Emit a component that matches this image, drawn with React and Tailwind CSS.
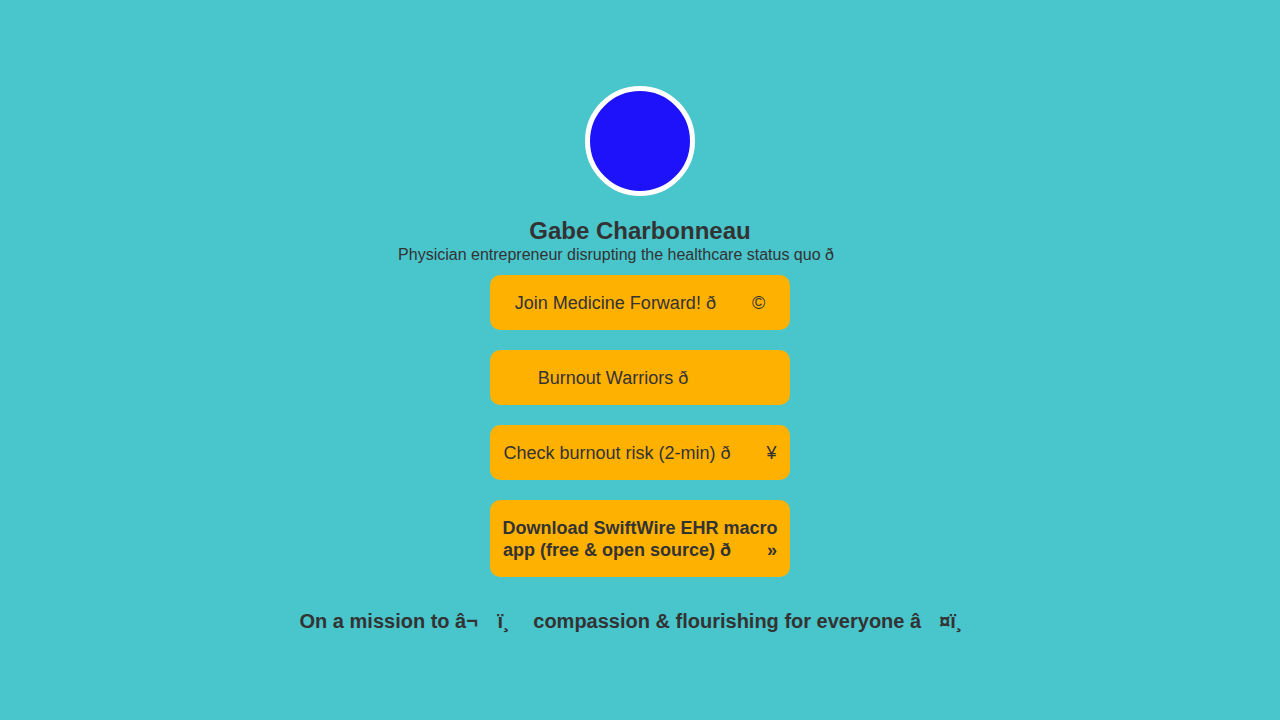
import React from 'react';

// invisible gap left by mangled emoji bytes, about one em wide per byte
function Gap({ n = 1 }) {
  return <span className="inline-block" style={{ width: `${n}em` }}></span>;
}

const links = [
  { label: <>Join Medicine Forward! ð<Gap n={2} />©</> },
  { label: <>Burnout Warriors ð<Gap n={3} /></> },
  { label: <>Check burnout risk (2-min) ð<Gap n={2} />¥</> },
  { label: <>Download SwiftWire EHR macro app (free &amp; open source) ð<Gap n={2} />»</>, bold: true },
];

export default function App() {
  return (
    <div
      className="min-h-screen bg-[#49c5cc] text-[#333333] flex flex-col items-center pt-[86px]"
      style={{ fontFamily: '"Liberation Sans", Arial, sans-serif' }}
    >
      <div className="w-[110px] h-[110px] rounded-full border-[5px] border-white bg-[#1e12fb]"></div>

      <h1 className="mt-[21px] text-[24px] leading-[28px] font-bold">Gabe Charbonneau</h1>
      <p className="text-[16px] leading-[20px]">
        Physician entrepreneur disrupting the healthcare status quo ð<Gap n={3} />
      </p>

      <div className="mt-[10px] flex flex-col gap-5 w-[300px]">
        {links.map((l, i) => (
          <a
            key={i}
            href="#"
            className={
              'block bg-[#ffb100] rounded-[10px] px-3 py-[16.5px] text-center text-[18px] leading-[22px] ' +
              (l.bold ? 'font-bold' : '')
            }
          >
            {l.label}
          </a>
        ))}
      </div>

      <p className="mt-[32px] text-[20px] leading-[24px] font-bold">
        On a mission to â¬<Gap n={0.7} /> ï¸<Gap n={0.9} /> compassion &amp; flourishing for everyone â<Gap n={0.9} />¤ï¸<Gap n={0.9} />
      </p>
    </div>
  );
}
